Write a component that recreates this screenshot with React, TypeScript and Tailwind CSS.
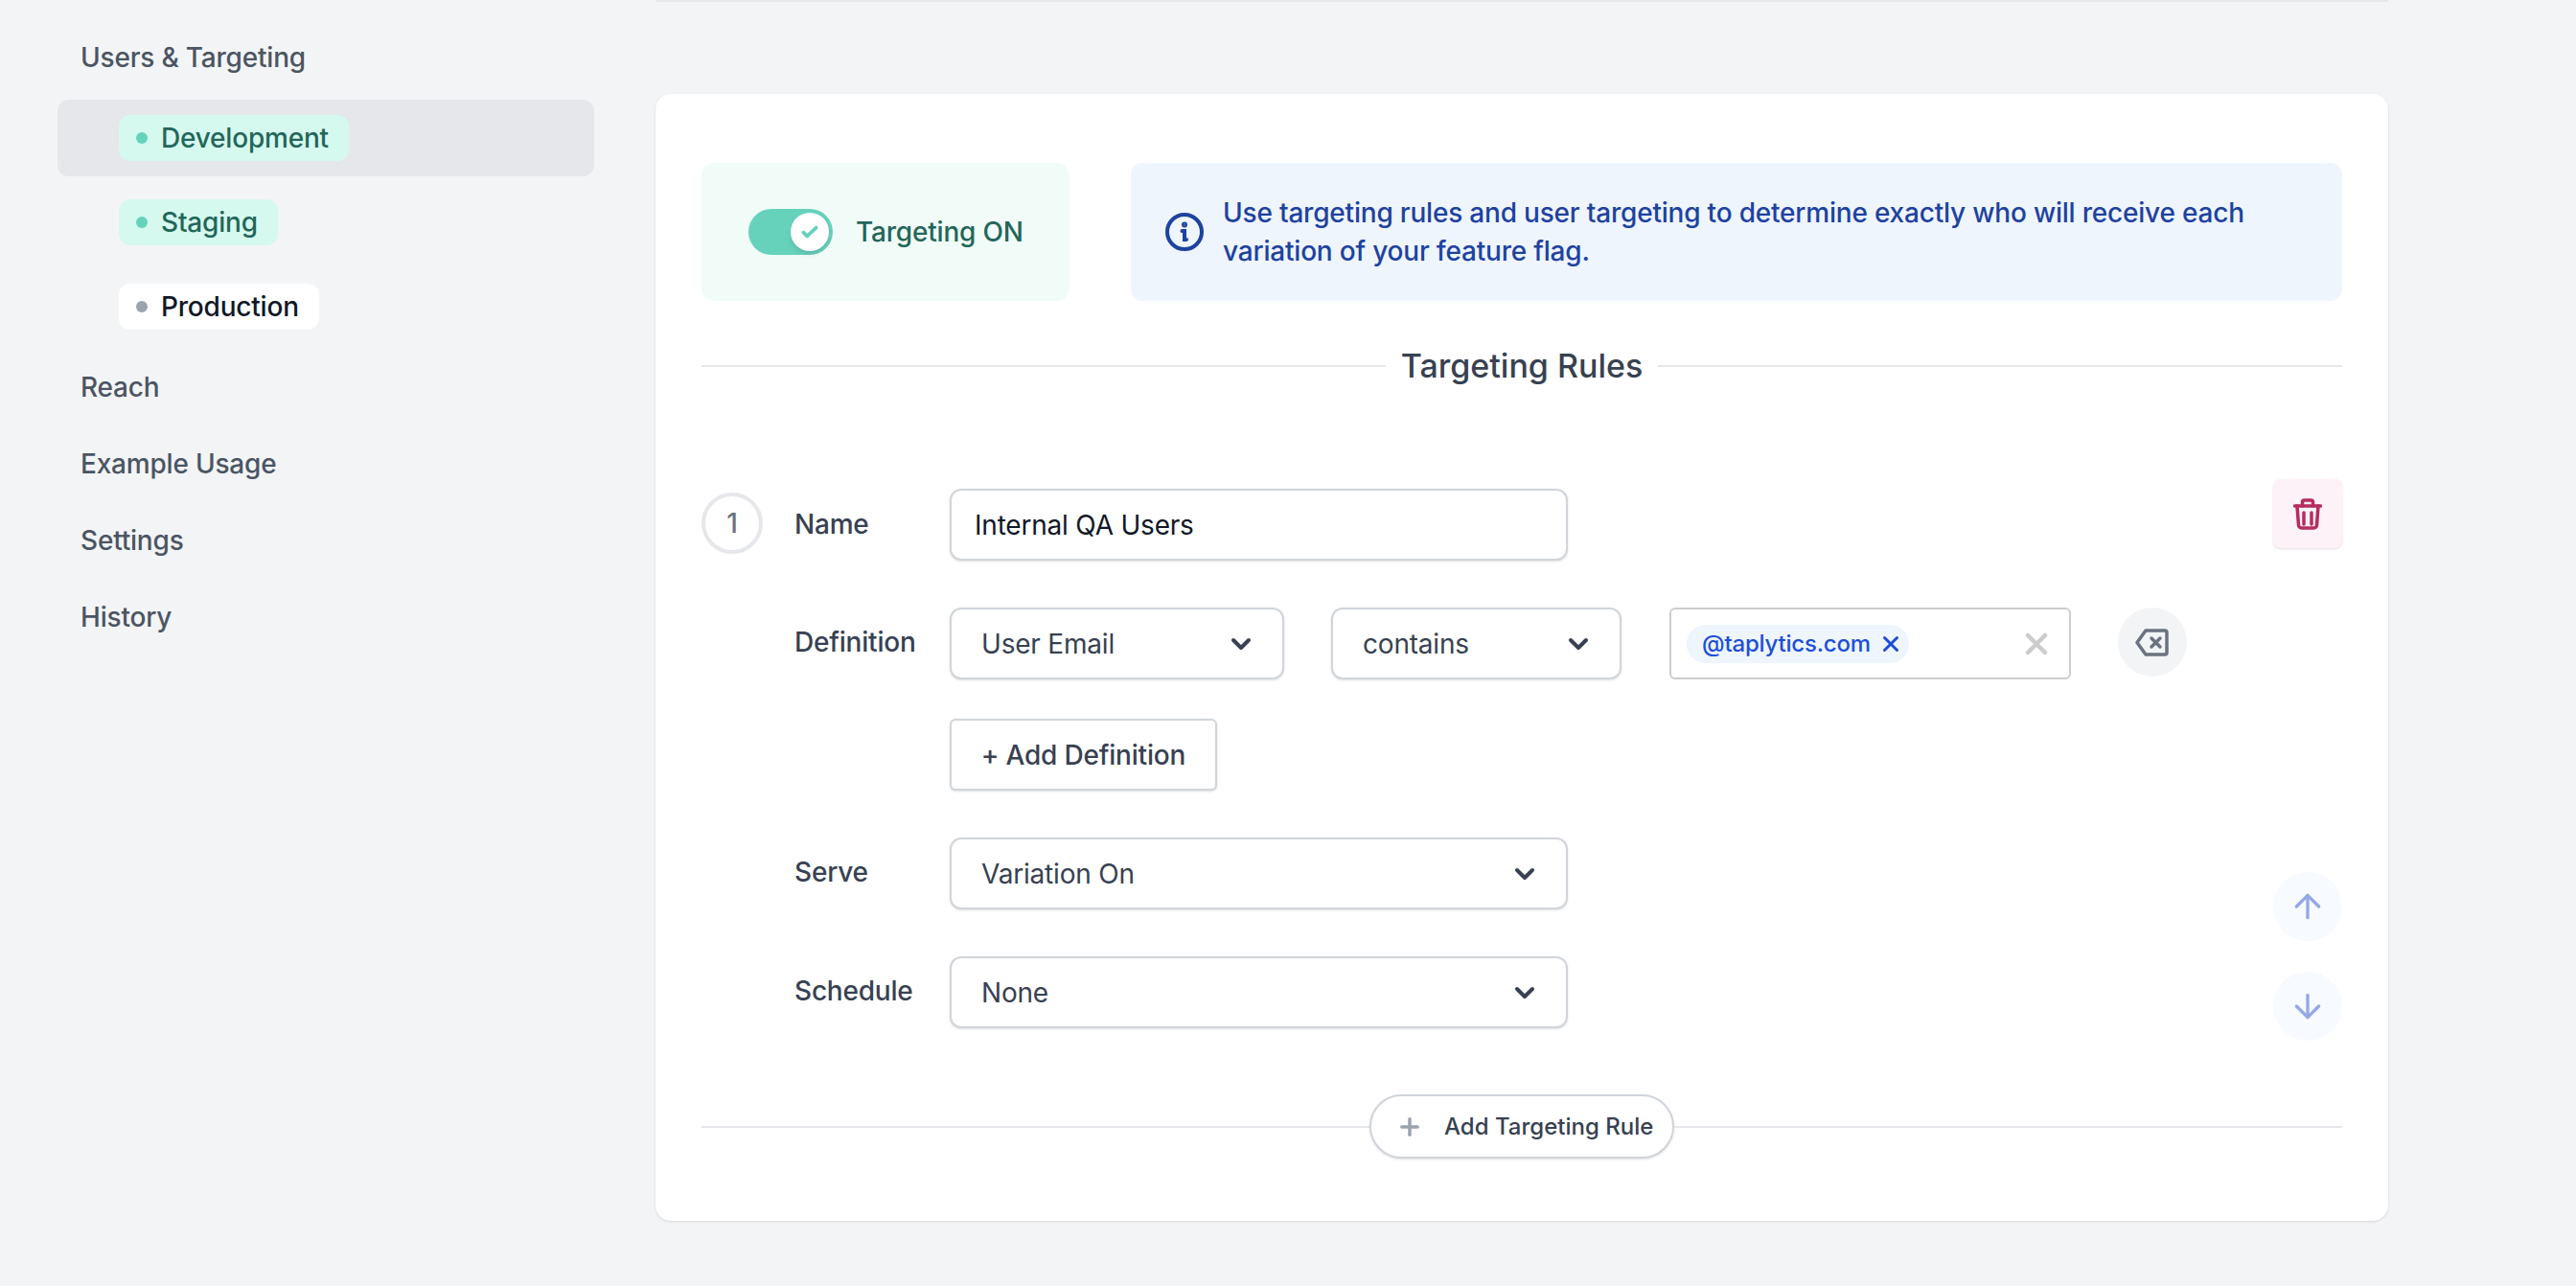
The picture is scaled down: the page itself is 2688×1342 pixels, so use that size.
import { ArrowDown, ArrowUp, ChevronDown, Plus, X } from "lucide-react";

const subItems = [
  { label: "Development", active: true, on: true },
  { label: "Staging", active: false, on: true },
  { label: "Production", active: false, on: false },
];

const bottomItems = ["Reach", "Example Usage", "Settings", "History"];

function Select({ label, className }: { label: string; className: string }) {
  return (
    <div className={`flex h-[75px] items-center justify-between rounded-xl border-2 border-[#d1d5db] bg-white pl-[31px] pr-[27px] text-[28px] text-[#374151] shadow-sm ${className}`}>
      <span>{label}</span>
      <ChevronDown size={32} strokeWidth={3} className="text-[#374151]" />
    </div>
  );
}

function FieldLabel({ children }: { children: string }) {
  return <div className="w-[162px] shrink-0 text-[28px] font-medium text-[#374151]">{children}</div>;
}

function Sidebar() {
  return (
    <aside className="w-[684px] shrink-0 pt-[20px] pl-[60px] pr-[64px] text-[28px] font-medium text-[#4b5563]">
      <div className="flex h-[80px] items-center pl-[24px]">Users &amp; Targeting</div>
      <div className="mt-[4px] mb-[4px] flex flex-col gap-[8px]">
        {subItems.map((item) => (
          <div
            key={item.label}
            className={`flex h-[80px] items-center rounded-xl pl-[64px] ${item.active ? "bg-[#e5e7eb]" : ""}`}
          >
            <div
              className={`flex h-[48px] items-center gap-[14px] rounded-xl pl-[18px] pr-[21px] ${
                item.on ? "bg-[#d5f9ee] text-[#23665a]" : "bg-white text-[#111827]"
              }`}
            >
              <span className={`h-[12px] w-[12px] rounded-full ${item.on ? "bg-[#66d2bc]" : "bg-[#9ca3af]"}`} />
              {item.label}
            </div>
          </div>
        ))}
      </div>
      {bottomItems.map((item) => (
        <div key={item} className="flex h-[80px] items-center pl-[24px]">
          {item}
        </div>
      ))}
    </aside>
  );
}

function TargetingToggle() {
  return (
    <div className="flex h-[144px] w-[384px] shrink-0 items-center gap-[24px] rounded-xl bg-[#f1fcf8] pl-[49px]">
      <div className="flex h-[48px] w-[88px] items-center justify-end rounded-full bg-[#66d2bc] pr-[4px]">
        <div className="flex h-[40px] w-[40px] items-center justify-center rounded-full bg-white shadow-md">
          <svg width="22" height="22" viewBox="0 0 20 20" fill="none" stroke="#66d2bc" strokeWidth="3.5" strokeLinecap="round" strokeLinejoin="round">
            <path d="M4 10.5l3.5 3.5L16 6" />
          </svg>
        </div>
      </div>
      <span className="text-[28px] font-medium text-[#23665a]">Targeting ON</span>
    </div>
  );
}

function InfoNote() {
  return (
    <div className="flex h-[144px] flex-1 items-center gap-[20px] rounded-xl bg-[#eef5fd] pl-[36px] pr-[80px]">
      <svg width="40" height="40" viewBox="0 0 40 40" fill="none" stroke="#1e429f" strokeWidth="4" strokeLinecap="round" className="shrink-0">
        <circle cx="20" cy="20" r="18" />
        <path d="M17.5 19h2.5v9h2" />
        <circle cx="20" cy="12.5" r="1" fill="#1e429f" />
      </svg>
      <p className="text-[28px] font-medium leading-[40px] text-[#1e429f]">
        Use targeting rules and user targeting to determine exactly who will receive each variation of your feature flag.
      </p>
    </div>
  );
}

function BackspaceIcon() {
  return (
    <svg width="36" height="29" viewBox="0 0 36 29" fill="none" stroke="#6b7280" strokeWidth="3.5" strokeLinecap="round" strokeLinejoin="round">
      <path d="M11 2h20a2 2 0 0 1 2 2v21a2 2 0 0 1-2 2H11L2 14.5z" />
      <path d="M17 10l9 9M26 10l-9 9" />
    </svg>
  );
}

function TrashIcon() {
  return (
    <svg width="30" height="33" viewBox="0 0 30 33" fill="none" stroke="#b72c60" strokeWidth="3.5" strokeLinecap="round" strokeLinejoin="round">
      <path d="M1.5 8h27" />
      <path d="M9.5 8V4a2 2 0 0 1 2-2h7a2 2 0 0 1 2 2v4" />
      <path d="M4 8l1.5 20a3 3 0 0 0 3 3h13a3 3 0 0 0 3-3L26 8" />
      <path d="M11 15v12M19 15v12" />
    </svg>
  );
}

function MoveButton({ down }: { down?: boolean }) {
  return (
    <div className="flex h-[72px] w-[72px] items-center justify-center rounded-full bg-[#f7faff]">
      {down ? (
        <ArrowDown size={40} strokeWidth={2} className="text-[#93a8e8]" />
      ) : (
        <ArrowUp size={40} strokeWidth={2} className="text-[#93a8e8]" />
      )}
    </div>
  );
}

function Rule() {
  return (
    <div className="mt-[96px] flex h-[586px]">
      <div className="mt-[14px] flex h-[64px] w-[64px] shrink-0 items-center justify-center rounded-full border-[4px] border-[#e5e7eb] text-[28px] font-medium text-[#6b7280]">
        1
      </div>
      <div className="ml-[33px] flex-1 pt-[10px]">
        <div className="flex">
          <div className="pt-[16px]">
            <FieldLabel>Name</FieldLabel>
          </div>
          <div className="flex h-[75px] w-[645px] items-center rounded-xl border-2 border-[#d1d5db] bg-white pl-[24px] text-[28px] text-[#111827] shadow-sm">
            Internal QA Users
          </div>
        </div>
        <div className="mt-[49px] flex">
          <div className="pt-[15px]">
            <FieldLabel>Definition</FieldLabel>
          </div>
          <Select label="User Email" className="w-[349px]" />
          <Select label="contains" className="ml-[49px] w-[303px]" />
          <div className="ml-[50px] flex h-[75px] w-[419px] items-center justify-between rounded-md border-2 border-[#cccccc] bg-white pl-[16px] pr-[16px]">
            <div className="flex h-[40px] items-center gap-[8px] rounded-full bg-[#eef5fd] pl-[16px] pr-[6px] text-[24px] font-medium text-[#1d4ed8]">
              @taplytics.com
              <X size={26} strokeWidth={2.75} />
            </div>
            <X size={36} strokeWidth={3} className="text-[#cccccc]" />
          </div>
          <div className="ml-[49px] flex h-[72px] w-[72px] items-center justify-center rounded-full bg-[#f3f4f6]">
            <BackspaceIcon />
          </div>
        </div>
        <div className="mt-[41px] flex pl-[162px]">
          <div className="flex h-[75px] w-[279px] items-center justify-center rounded-md border-2 border-[#d1d5db] bg-white text-[28px] font-medium text-[#374151] shadow-sm">
            + Add Definition
          </div>
        </div>
        <div className="mt-[49px] flex">
          <div className="pt-[15px]">
            <FieldLabel>Serve</FieldLabel>
          </div>
          <Select label="Variation On" className="w-[645px]" />
        </div>
        <div className="mt-[49px] flex">
          <div className="pt-[15px]">
            <FieldLabel>Schedule</FieldLabel>
          </div>
          <Select label="None" className="w-[645px]" />
        </div>
      </div>
      <div className="flex w-[72px] shrink-0 flex-col justify-between">
        <div className="flex h-[72px] w-[72px] items-center justify-center rounded-lg bg-[#fdf2f8] shadow-sm">
          <TrashIcon />
        </div>
        <div className="flex flex-col gap-[32px]">
          <MoveButton />
          <MoveButton down />
        </div>
      </div>
    </div>
  );
}

export default function App() {
  return (
    <div className="flex h-[1342px] w-[2688px] overflow-hidden bg-[#f3f4f6] font-['Inter',sans-serif] tracking-[-0.2px]">
      <Sidebar />
      <main className="w-[1808px] shrink-0">
        <div className="h-[2px] bg-[#e5e7eb]" />
        <section className="mt-[96px] h-[1176px] rounded-2xl bg-white px-[48px] pt-[72px] shadow">
          <div className="flex gap-[64px]">
            <TargetingToggle />
            <InfoNote />
          </div>
          <div className="mt-[46px] flex items-center gap-[16px]">
            <div className="h-[2px] flex-1 bg-[#e5e7eb]" />
            <h2 className="text-[34px] font-medium leading-[44px] tracking-normal text-[#374151]">Targeting Rules</h2>
            <div className="h-[2px] flex-1 bg-[#e5e7eb]" />
          </div>
          <Rule />
          <div className="mt-[56px] flex items-center">
            <div className="h-[2px] flex-1 bg-[#e5e7eb]" />
            <div className="flex h-[67px] w-[318px] items-center gap-[22px] rounded-full border-2 border-[#d1d5db] bg-white pl-[26px] text-[24px] font-medium tracking-normal text-[#374151] shadow-sm">
              <Plus size={28} strokeWidth={3} className="text-[#9ca3af]" />
              Add Targeting Rule
            </div>
            <div className="h-[2px] flex-1 bg-[#e5e7eb]" />
          </div>
        </section>
      </main>
    </div>
  );
}
